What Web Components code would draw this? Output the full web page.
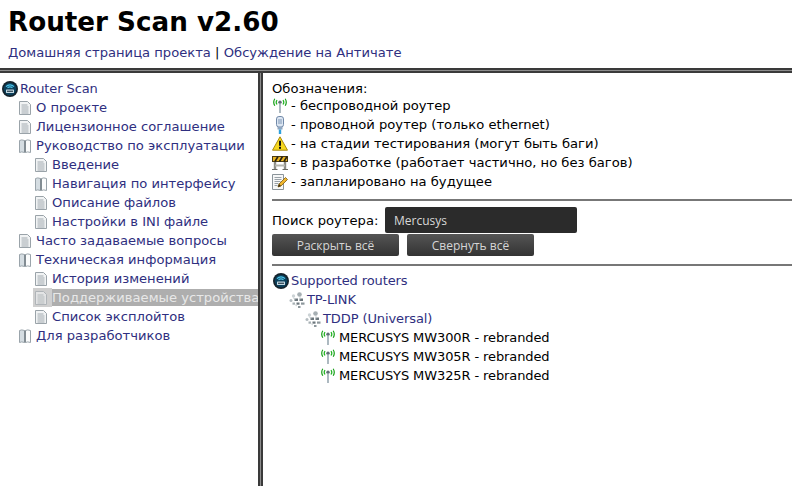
<!DOCTYPE html>
<html>
<head>
<meta charset="utf-8">
<title>Router Scan</title>
<style>
    html, body {
        margin: 0;
        height: 100%;
        overflow: hidden;
        background: #fff;
        font: 13.13px/19px "DejaVu Sans", sans-serif;
        color: #000;
    }
</style>
</head>
<body>
<rs-page></rs-page>

<script>
// all icons live here, drawn small like the 16px gifs of the original help page
const icons = {
    root: `<svg width="16" height="16" viewBox="0 0 16 16">
        <circle cx="8" cy="8" r="8" fill="#15222b"/>
        <circle cx="8" cy="8" r="6.300" fill="#0b3f5a"/>
        <path d="M4 5.600a5.600 5.600 0 0 1 8 0M5.500 7a3.400 3.400 0 0 1 5 0" fill="none" stroke="#4fc8ee" stroke-width="1.100"/>
        <rect x="4" y="8.500" width="8" height="3.500" rx=".6" fill="#c4d8e2"/>
        <rect x="5" y="9.700" width="6" height="1.100" fill="#1d3442"/>
    </svg>`,
    page: `<svg width="12" height="14" viewBox="0 0 12 14">
        <path d="M.5.5h8l3 3v10H.5z" fill="#f1f3f4" stroke="#9aa3a9"/>
        <path d="M2.500 4h6M2.500 6h7M2.500 8h7M2.500 10h7M2.500 12h7" stroke="#a2aab0"/>
    </svg>`,
    book: `<svg width="12" height="14" viewBox="0 0 12 14">
        <path d="M.5 1.500q2-1.200 5 0v12q-3-1.200-5 0z" fill="#d5dde2" stroke="#9aa4ab"/>
        <path d="M6.500 1.500q2-1.200 5 0v12q-3-1.200-5 0z" fill="#fbfcfc" stroke="#9aa4ab"/>
        <path d="M6 1.500v12" stroke="#6a747b"/>
    </svg>`,
    wifi: `<svg width="16" height="15" viewBox="0 0 16 15">
        <path d="M2.800 .8a6.500 6.500 0 0 0 0 6.900M13.200 .8a6.500 6.500 0 0 1 0 6.900" fill="none" stroke="#18a018" stroke-width="1.200"/>
        <path d="M5 2a3.800 3.800 0 0 0 0 4.500M11 2a3.800 3.800 0 0 1 0 4.500" fill="none" stroke="#22b422" stroke-width="1.200"/>
        <circle cx="8" cy="4.200" r="1.700" fill="#5f6d75"/>
        <path d="M8 5.500v9.500" stroke="#a4b2ba" stroke-width="1.800"/>
    </svg>`,
    wired: `<svg width="12" height="18" viewBox="0 0 12 18">
        <rect x="2.500" y=".5" width="7" height="10.500" rx="2.400" fill="#dce6f2" stroke="#7088a8"/>
        <path d="M5 3v5M7 3v5" stroke="#7f96b4"/>
        <rect x="3.500" y="11" width="5" height="2.500" fill="#90a6c0"/>
        <path d="M6 13.500v4.500" stroke="#2f9fdc" stroke-width="2.400"/>
    </svg>`,
    warn: `<svg width="16" height="15" viewBox="0 0 16 15">
        <path d="M8 .8L15.500 14.200H.5z" fill="#f7d820" stroke="#a98a10" stroke-linejoin="round"/>
        <path d="M8 4.800v5" stroke="#111" stroke-width="2"/>
        <rect x="7" y="10.800" width="2" height="2" fill="#111"/>
    </svg>`,
    barrier: `<svg width="16" height="15" viewBox="0 0 16 15">
        <path d="M3 1v13M13 1v13" stroke="#8d8d86" stroke-width="2.400"/>
        <rect x=".5" y="1.500" width="15" height="5" fill="#e9b422" stroke="#4b3b12"/>
        <path d="M3 6.500l3-5M7.500 6.500l3-5M12 6.500l3-5" stroke="#2a2312" stroke-width="1.600"/>
        <rect x="3" y="9.500" width="10" height="2" fill="#b5b5ad"/>
        <path d="M0 14.500h5.500M10.500 14.500h5.500" stroke="#6a6a64"/>
    </svg>`,
    note: `<svg width="16" height="16" viewBox="0 0 16 16">
        <path d="M.5.5h11v15H.5z" fill="#f7f8f8" stroke="#8b949a"/>
        <path d="M2.500 3.500h7M2.500 5.500h7M2.500 7.500h6M2.500 9.500h4M2.500 11.500h3" stroke="#9aa2a8"/>
        <path d="M6 13l1-3 6.500-6.500 2 2L9 12z" fill="#f0b62e" stroke="#7d5a10" stroke-width=".8"/>
        <path d="M6 13l1-3 2 2z" fill="#3a2c10"/>
    </svg>`,
    net: `<svg width="16" height="16" viewBox="0 0 16 16">
        <circle cx="10.500" cy="2.500" r="2.300" fill="#a6afb3"/>
        <circle cx="4.500" cy="4" r="1.700" fill="#ccd3d6"/>
        <circle cx="2" cy="8.500" r="1.500" fill="#b4bcc0"/>
        <rect x="5.500" y="6.500" width="3.500" height="2.500" fill="#6c777d"/>
        <rect x="10.500" y="6.500" width="3.500" height="2.500" fill="#6c777d"/>
        <rect x="7.500" y="10.500" width="3" height="2.200" fill="#6c777d"/>
        <rect x="12" y="10.500" width="3.500" height="2.200" fill="#8d979c"/>
        <rect x="3.500" y="10.500" width="2.500" height="2.200" fill="#a6afb3"/>
        <rect x="9" y="14" width="2.500" height="2" fill="#8d979c"/>
        <path d="M4 6l3 1M11 4.500v3M5 12l3 2" stroke="#c3cacd" stroke-width=".8"/>
    </svg>`
}

const rowTemplate = document.createElement('template')
rowTemplate.innerHTML = `
    <style>
        :host {
            display: flex;
            align-items: center;
            height: 19px;
            white-space: nowrap;
            color: #2f2f80;
        }
        .icon {
            flex: none;
            display: flex;
            align-items: center;
            justify-content: flex-start;
        }
        .text {
            flex: none;
        }
        :host([latin]) .text {
            font-size: 13px;
            letter-spacing: -.1px;
        }
        :host([selected]) .icon {
            box-sizing: border-box;
            padding-left: 2px;
            height: 19px;
            background: #cfcfcf;
        }
        :host([selected]) .text {
            flex: 1;
            overflow: hidden;
            height: 17px;
            line-height: 17px;
            background: #aeaeae;
            color: #e8e8e8;
        }
        :host([selected]) svg {
            opacity: .6;
        }
        :host([plain]) {
            color: #000;
        }
    </style>
    <span class="icon"></span>
    <span class="text"><slot></slot></span>
`

class RsRow extends HTMLElement {
    constructor() {
        super()
        const shadow = this.attachShadow({ mode: 'open' })
        shadow.appendChild(rowTemplate.content.cloneNode(true))
    }

    connectedCallback() {
        const icon = this.shadowRoot.querySelector('.icon')
        icon.innerHTML = icons[this.getAttribute('icon')]
        // offset is where the icon starts, icon-width where the text starts after it
        icon.style.width = (this.getAttribute('icon-width') || 19) + 'px'
        this.style.paddingLeft = (this.getAttribute('offset') || 0) + 'px'
    }
}
customElements.define('rs-row', RsRow)

const headerTemplate = document.createElement('template')
headerTemplate.innerHTML = `
    <style>
        :host {
            display: block;
            height: 68px;
            box-sizing: border-box;
            padding: 0 8px;
        }
        h1 {
            margin: 0;
            padding-top: 5px;
            font: bold 26.2px/34px "DejaVu Sans", sans-serif;
            color: #000;
        }
        p {
            margin: 0;
            padding-top: 4px;
            line-height: 19px;
        }
        a {
            color: #2f2f80;
            text-decoration: none;
        }
    </style>
    <h1>Router Scan v2.60</h1>
    <p><a href="#">Домашняя страница проекта</a> | <a href="#">Обсуждение на Античате</a></p>
`

class RsHeader extends HTMLElement {
    constructor() {
        super()
        this.attachShadow({ mode: 'open' }).appendChild(headerTemplate.content.cloneNode(true))
    }
}
customElements.define('rs-header', RsHeader)

const sideTemplate = document.createElement('template')
sideTemplate.innerHTML = `
    <style>
        :host {
            display: block;
            width: 258px;
            flex: none;
            box-sizing: border-box;
            padding-top: 6px;
            overflow: hidden;
        }
    </style>
    <rs-row icon="root" offset="2" icon-width="18" latin>Router Scan</rs-row>
    <rs-row icon="page" offset="19" icon-width="17">О проекте</rs-row>
    <rs-row icon="page" offset="19" icon-width="17">Лицензионное соглашение</rs-row>
    <rs-row icon="book" offset="19" icon-width="17">Руководство по эксплуатации</rs-row>
    <rs-row icon="page" offset="35" icon-width="17">Введение</rs-row>
    <rs-row icon="book" offset="35" icon-width="17">Навигация по интерфейсу</rs-row>
    <rs-row icon="page" offset="35" icon-width="17">Описание файлов</rs-row>
    <rs-row icon="page" offset="35" icon-width="17">Настройки в INI файле</rs-row>
    <rs-row icon="page" offset="19" icon-width="17">Часто задаваемые вопросы</rs-row>
    <rs-row icon="book" offset="19" icon-width="17">Техническая информация</rs-row>
    <rs-row icon="page" offset="35" icon-width="17">История изменений</rs-row>
    <rs-row icon="page" offset="33" icon-width="19" selected>Поддерживаемые устройства</rs-row>
    <rs-row icon="page" offset="35" icon-width="17">Список эксплойтов</rs-row>
    <rs-row icon="book" offset="19" icon-width="17">Для разработчиков</rs-row>
`

class RsSide extends HTMLElement {
    constructor() {
        super()
        this.attachShadow({ mode: 'open' }).appendChild(sideTemplate.content.cloneNode(true))
    }
}
customElements.define('rs-side', RsSide)

const legendTemplate = document.createElement('template')
legendTemplate.innerHTML = `
    <style>
        :host {
            display: block;
            color: #000;
        }
        .head {
            height: 17px;
        }
        .item {
            display: flex;
            align-items: center;
            height: 19px;
            white-space: nowrap;
        }
        .item span {
            width: 19px;
            flex: none;
            display: flex;
            align-items: center;
            justify-content: flex-start;
        }
    </style>
    <div class="head">Обозначения:</div>
    <div class="item"><span>${icons.wifi}</span>- беспроводной роутер</div>
    <div class="item"><span style="padding-left:2px;width:17px">${icons.wired}</span>- проводной роутер (только ethernet)</div>
    <div class="item"><span>${icons.warn}</span>- на стадии тестирования (могут быть баги)</div>
    <div class="item"><span>${icons.barrier}</span>- в разработке (работает частично, но без багов)</div>
    <div class="item"><span>${icons.note}</span>- запланировано на будущее</div>
`

class RsLegend extends HTMLElement {
    constructor() {
        super()
        this.attachShadow({ mode: 'open' }).appendChild(legendTemplate.content.cloneNode(true))
    }
}
customElements.define('rs-legend', RsLegend)

const searchTemplate = document.createElement('template')
searchTemplate.innerHTML = `
    <style>
        :host {
            display: block;
        }
        .field {
            box-sizing: border-box;
            flex: none;
            width: 192px;
            height: 26px;
            padding: 0 9px;
            border: 0;
            border-radius: 2px;
            background: #2b2b2b;
            color: #d8d8d8;
            font: 12px "Open Sans", sans-serif;
            outline: none;
        }
        .wrap {
            display: flex;
            align-items: center;
            gap: 8px;
        }
        .label {
            flex: none;
            width: 105px;
            white-space: nowrap;
        }
        .buttons {
            display: flex;
            gap: 8px;
            margin-top: 1px;
        }
        button {
            width: 127px;
            height: 22px;
            padding: 0;
            border: 0;
            border-radius: 2px;
            background: linear-gradient(#555, #333);
            color: #d6d6d6;
            font: 12px "Open Sans", sans-serif;
        }
    </style>
    <div class="wrap">
        <span class="label">Поиск роутера:</span>
        <input class="field" value="Mercusys">
    </div>
    <div class="buttons">
        <button>Раскрыть всё</button>
        <button>Свернуть всё</button>
    </div>
`

class RsSearch extends HTMLElement {
    constructor() {
        super()
        this.attachShadow({ mode: 'open' }).appendChild(searchTemplate.content.cloneNode(true))
    }
}
customElements.define('rs-search', RsSearch)

const pageTemplate = document.createElement('template')
pageTemplate.innerHTML = `
    <style>
        :host {
            display: flex;
            flex-direction: column;
            height: 486px;
        }
        .rule {
            flex: none;
            height: 5px;
            border-top: 2px solid #3a3a3a;
            border-bottom: 2px solid #3a3a3a;
            background: #8c8c8c;
            box-sizing: border-box;
        }
        .main {
            flex: 1;
            display: flex;
            min-height: 0;
        }
        .divider {
            flex: none;
            width: 5px;
            background: #8c8c8c;
            border-left: 2px solid #3a3a3a;
            border-right: 2px solid #3a3a3a;
            box-sizing: border-box;
        }
        .content {
            flex: 1;
            min-width: 0;
            padding: 6px 0 0 9px;
        }
        hr {
            margin: 0;
            height: 2px;
            border: 0;
            background: #777;
        }
        .h1 { margin: 8px 0 6px; }
        .h2 { margin: 8px 0 5px; }
    </style>
    <rs-header></rs-header>
    <div class="rule"></div>
    <div class="main">
        <rs-side></rs-side>
        <div class="divider"></div>
        <div class="content">
            <rs-legend></rs-legend>
            <hr class="h1">
            <rs-search></rs-search>
            <hr class="h2">
            <rs-row icon="root" offset="1" icon-width="18" latin>Supported routers</rs-row>
            <rs-row icon="net" offset="17" icon-width="18" latin>TP-LINK</rs-row>
            <rs-row icon="net" offset="33" icon-width="18" latin>TDDP (Universal)</rs-row>
            <rs-row icon="wifi" offset="48" plain latin>MERCUSYS MW300R - rebranded</rs-row>
            <rs-row icon="wifi" offset="48" plain latin>MERCUSYS MW305R - rebranded</rs-row>
            <rs-row icon="wifi" offset="48" plain latin>MERCUSYS MW325R - rebranded</rs-row>
        </div>
    </div>
`

class RsPage extends HTMLElement {
    constructor() {
        super()
        this.attachShadow({ mode: 'open' }).appendChild(pageTemplate.content.cloneNode(true))
    }
}
customElements.define('rs-page', RsPage)
</script>
</body>
</html>
